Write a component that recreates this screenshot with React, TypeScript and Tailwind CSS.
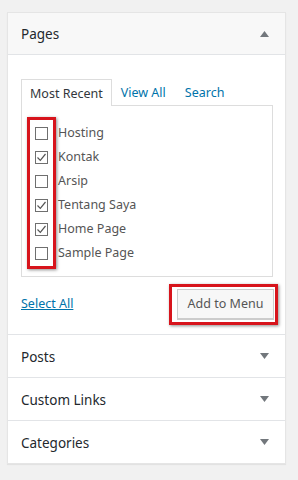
import React from 'react';

const pages = [
  { label: 'Hosting', checked: false },
  { label: 'Kontak', checked: true },
  { label: 'Arsip', checked: false },
  { label: 'Tentang Saya', checked: true },
  { label: 'Home Page', checked: true },
  { label: 'Sample Page', checked: false },
];

const Caret: React.FC<{ up?: boolean }> = ({ up = false }) => (
  <svg width="9" height="6" viewBox="0 0 9 6" className={up ? '' : 'rotate-180'}>
    <path d="M0 6 L4.5 0 L9 6 Z" fill="#72777c" />
  </svg>
);

const Box: React.FC<{ checked: boolean }> = ({ checked }) => (
  <span className="w-[13px] h-[13px] border border-[#6f6f6f] bg-white flex items-center justify-center shrink-0">
    {checked && (
      <svg width="11" height="11" viewBox="0 0 11 11">
        <path d="M1.5 5.5 L4.3 8.3 L9.5 2" fill="none" stroke="#555" strokeWidth="1.2" />
      </svg>
    )}
  </span>
);

const Section: React.FC<{ title: string }> = ({ title }) => (
  <div className="h-[43px] border-t border-[#e2e4e7] flex items-center justify-between pl-[13px] pr-[16px]">
    <span className="text-[13.5px] text-[#23282d] pt-[2px]">{title}</span>
    <Caret />
  </div>
);

export default function App() {
  return (
    <div
      className="w-[298px] h-[480px] bg-[#f1f1f1] pt-[12px] pl-[7px] pr-[12px]"
      style={{ fontFamily: '"Noto Sans", "Open Sans", sans-serif' }}
    >
      <div className="bg-white border border-[#e5e5e5] shadow-[0_1px_1px_rgba(0,0,0,0.06)]">
        {/* Pages header */}
        <div className="h-[42px] bg-[#f8f8f8] border-b border-[#e2e4e7] flex items-center justify-between pl-[13px] pr-[16px]">
          <span className="text-[13.5px] text-[#23282d] pt-[2px]">Pages</span>
          <Caret up />
        </div>

        <div className="pt-[24px] pl-[13px] pr-[12px]">
          {/* Tabs */}
          <div className="flex h-[26px] text-[12.5px]">
            <div className="h-[27px] pt-[2px] px-[8px] border border-b-0 border-[#dddddd] bg-white flex items-center text-[#32373c] relative z-10">
              Most Recent
            </div>
            <span className="h-[27px] pt-[2px] ml-[9px] flex items-center text-[#0073aa]">View All</span>
            <span className="h-[27px] pt-[2px] ml-[19px] flex items-center text-[#0073aa]">Search</span>
          </div>

          {/* Tab panel */}
          <div className="relative border border-[#dddddd] h-[172px] pt-[15px] pl-[13px]">
            <div className="flex flex-col">
              {pages.map((p) => (
                <div key={p.label} className="h-[24px] flex items-center gap-[10px]">
                  <Box checked={p.checked} />
                  <span className="text-[12.5px] text-[#555]">{p.label}</span>
                </div>
              ))}
            </div>
            <div className="absolute left-[5px] top-[11px] w-[29px] h-[152px] border-[3px] border-[#d7141c] shadow-[1px_1px_3px_rgba(0,0,0,0.45)]" />
          </div>

          {/* Footer */}
          <div className="h-[57px] pb-[3px] flex items-center justify-between">
            <span className="text-[12.5px] text-[#0073aa] underline">Select All</span>
            <div className="relative mr-[-1px]">
              <div className="h-[30px] w-[97px] border border-[#cccccc] bg-[#f7f7f7] shadow-[0_1px_0_#cccccc] flex items-center justify-center text-[12.5px] text-[#555]">
                Add to Menu
              </div>
              <div className="absolute -left-[8px] -top-[5px] w-[109px] h-[41px] border-[3px] border-[#d7141c] shadow-[1px_1px_3px_rgba(0,0,0,0.45)]" />
            </div>
          </div>
        </div>

        <Section title="Posts" />
        <Section title="Custom Links" />
        <Section title="Categories" />
      </div>
    </div>
  );
}
